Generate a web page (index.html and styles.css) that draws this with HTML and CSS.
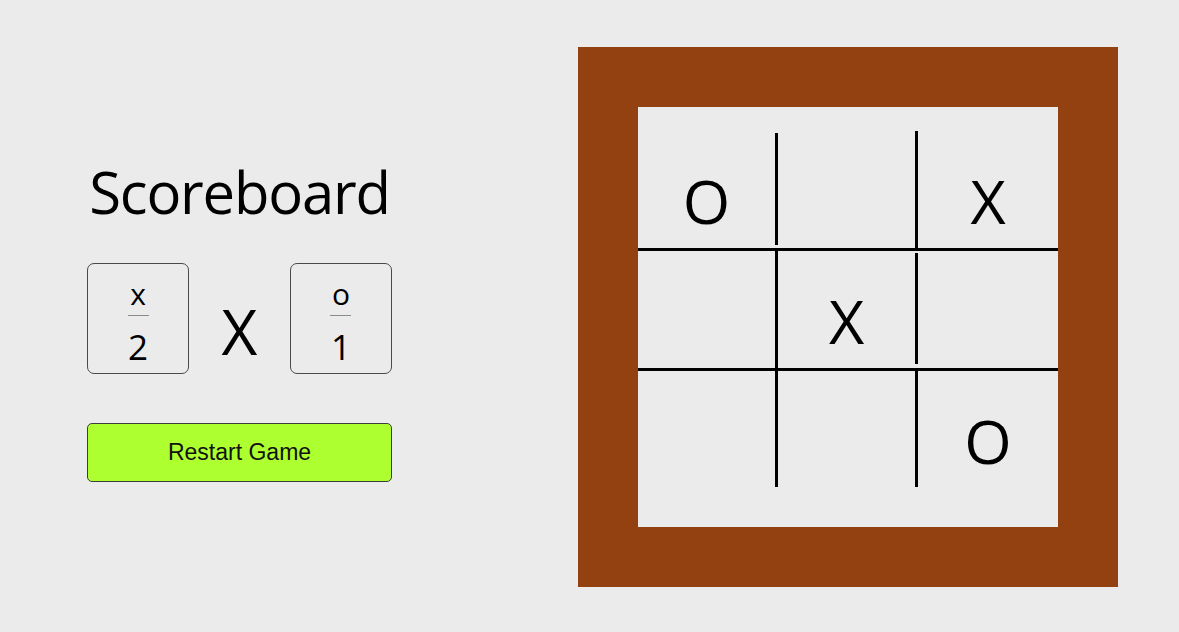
FILE: index.html
```html
<!DOCTYPE html>
<html lang="en">
<head>
<meta charset="utf-8">
<title>Tic Tac Toe</title>
<link rel="stylesheet" href="styles.css">
</head>
<body>
<div class="page">
  <section class="panel">
    <h1 class="title">Scoreboard</h1>
    <div class="scores">
      <div class="score-box">
        <span class="player">x</span>
        <span class="rule"></span>
        <span class="points">2</span>
      </div>
      <span class="versus">X</span>
      <div class="score-box">
        <span class="player">o</span>
        <span class="rule"></span>
        <span class="points">1</span>
      </div>
    </div>
    <button class="restart">Restart Game</button>
  </section>
  <section class="board">
    <div class="grid">
      <div class="row row-1">
        <div class="cell cell-wide">O</div>
        <div class="vline v1a"></div>
        <div class="cell cell-wide"></div>
        <div class="vline v1b"></div>
        <div class="cell cell-last">X</div>
      </div>
      <div class="row row-2">
        <div class="cell cell-wide"></div>
        <div class="vline v2a"></div>
        <div class="cell cell-wide">X</div>
        <div class="vline v2b"></div>
        <div class="cell cell-last"></div>
      </div>
      <div class="row row-3">
        <div class="cell cell-wide"></div>
        <div class="vline v3"></div>
        <div class="cell cell-wide"></div>
        <div class="vline v3"></div>
        <div class="cell cell-last">O</div>
      </div>
    </div>
  </section>
</div>
</body>
</html>
```

FILE: styles.css
```css
html, body {
  margin: 0;
  padding: 0;
  background: #ebebeb;
}

.page {
  display: flex;
  align-items: flex-start;
  height: 632px;
  box-sizing: border-box;
  padding: 47px 0 0 87px;
  font-family: "Open Sans", "Noto Sans", sans-serif;
  color: #000;
}

.panel {
  width: 305px;
  padding-top: 116px;
  display: flex;
  flex-direction: column;
}

.title {
  margin: 0;
  font-size: 58px;
  line-height: 58px;
  font-weight: 400;
  text-align: center;
  letter-spacing: -1.2px;
}

.scores {
  margin-top: 42px;
  display: flex;
  justify-content: space-between;
  align-items: flex-start;
}

.score-box {
  width: 102px;
  height: 111px;
  box-sizing: border-box;
  border: 1px solid #4a4a4a;
  border-radius: 7px;
  display: flex;
  flex-direction: column;
  align-items: center;
  padding-top: 15px;
}

.player {
  font-size: 30px;
  line-height: 30px;
}

.rule {
  display: block;
  width: 21px;
  height: 1px;
  margin-top: 6px;
  background: #8a8a8a;
}

.points {
  margin-top: 13px;
  font-size: 35px;
  line-height: 35px;
}

.versus {
  margin-top: 39px;
  font-size: 62px;
  line-height: 58px;
}

.restart {
  margin-top: 49px;
  width: 305px;
  height: 59px;
  box-sizing: border-box;
  background: #adff2f;
  border: 1px solid #3d3d3d;
  border-radius: 5px;
  font-family: "Liberation Sans", Arial, sans-serif;
  font-size: 23px;
  color: #111;
  padding: 0;
}

.board {
  margin-left: 186px;
  width: 540px;
  height: 540px;
  box-sizing: border-box;
  padding: 60px;
  background: #934111;
}

.grid {
  width: 420px;
  height: 420px;
  background: #ebebeb;
  display: flex;
  flex-direction: column;
}

.row {
  display: flex;
  align-items: flex-start;
  box-sizing: border-box;
}

.row-1 { height: 144px; border-bottom: 3px solid #000; }
.row-2 { height: 120px; border-bottom: 3px solid #000; }
.row-3 { height: 156px; }

.cell {
  height: 100%;
  box-sizing: border-box;
  display: flex;
  justify-content: center;
  align-items: flex-start;
  font-size: 61px;
  line-height: 60px;
}

.row-1 .cell { padding-top: 64px; }
.row-2 .cell,
.row-3 .cell { padding-top: 40px; }

.cell-wide { width: 137px; }
.cell-last { width: 140px; }

.vline {
  width: 3px;
  background: #000;
  flex-shrink: 0;
}

.v1a { margin-top: 26px; height: 112px; }
.v1b { margin-top: 24px; height: 117px; }
.v2a { margin-top: 0; height: 117px; }
.v2b { margin-top: 2px; height: 111px; }
.v3 { margin-top: 0; height: 116px; }
```
